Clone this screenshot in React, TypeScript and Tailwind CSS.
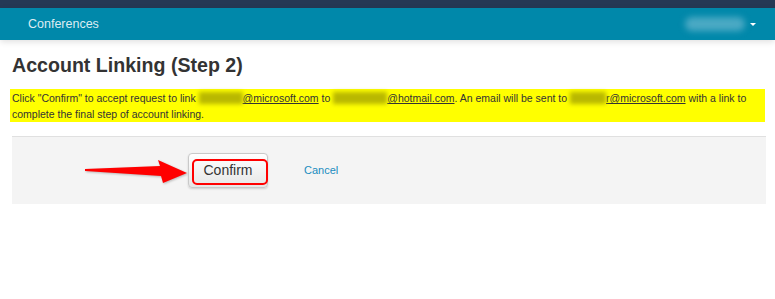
import React from 'react';

const Blur: React.FC<{ w: number }> = ({ w }) => (
  <span className="relative inline-block h-[12px] align-[-2px]" style={{ width: w }}>
    <span className="absolute inset-x-0 top-0 h-[12px] bg-[#b9b800] blur-[2px]" />
  </span>
);

const Arrow: React.FC = () => (
  <svg width="103" height="28" viewBox="0 0 103 28" className="shrink-0 drop-shadow-[1px_1px_1px_rgba(0,0,0,0.25)]">
    <polygon points="0,12 75,9 73,3 102,16 78,26 76,19 0,14" fill="#ff0000" />
  </svg>
);

const App: React.FC = () => {
  return (
    <div className="min-h-[299px] bg-white font-['Liberation_Sans',Arial,sans-serif] text-[#333]">
      <div className="h-2 bg-[#253955]" />
      <nav className="relative flex h-8 items-center justify-between bg-[#0088aa] pl-7 pr-[19px] shadow-[0_2px_6px_rgba(0,0,0,0.12)]">
        <span className="text-[12.5px] text-[#dcecf2]">Conferences</span>
        <div className="flex items-center gap-[5px]">
          <span className="h-[14px] w-[60px] rounded-full bg-[#4aa9c4] blur-[3px]" />
          <span className="h-0 w-0 border-x-[3px] border-t-[3px] border-x-transparent border-t-white" />
        </div>
      </nav>

      <div className="pt-[13px]">
        <h1 className="px-3 text-[19.6px] font-bold leading-6 text-[#333]">Account Linking (Step 2)</h1>

        <div className="mx-[10px] mt-3 h-[33px] bg-[#ffff00] px-[2px] pt-px text-[10.5px] leading-4 text-[#333]">
          Click "Confirm" to accept request to link <Blur w={44} />
          <a className="underline">@microsoft.com</a> to <Blur w={54} />
          <a className="underline">@hotmail.com</a>. An email will be sent to <Blur w={36} />
          <a className="underline">r@microsoft.com</a> with a link to complete the final step of account linking.
        </div>

        <div className="ml-3 mr-[9px] mt-[14px] flex h-[68px] items-center border-t border-[#e0e0e0] bg-[#f4f4f4] pl-[73px]">
          <Arrow />
          <button className="relative h-[35px] w-[80px] rounded-[4px] border border-[#c9c9c9] bg-gradient-to-b from-white to-[#e6e6e6] text-[14px] text-[#333] shadow-[0_1px_2px_rgba(0,0,0,0.15)]">
            <span className="absolute left-[3px] top-[5px] h-[26px] w-[76px] rounded-[5px] border-2 border-[#ff0000]" />
            <span className="relative">Confirm</span>
          </button>
          <a className="ml-[36px] text-[11px] text-[#1a8cbf]">Cancel</a>
        </div>
      </div>
    </div>
  );
};

export default App;
